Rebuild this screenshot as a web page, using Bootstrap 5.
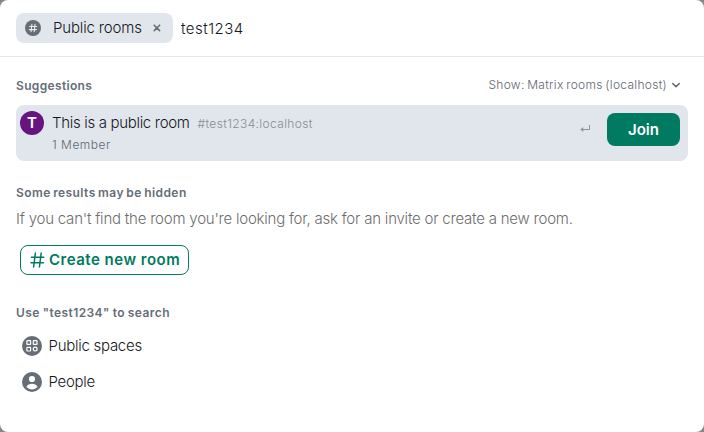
<!DOCTYPE html>
<html lang="en">
<head>
<meta charset="utf-8">
<meta name="viewport" content="width=device-width, initial-scale=1">
<title>Search</title>
<link href="https://cdn.jsdelivr.net/npm/bootstrap@5.3.0/dist/css/bootstrap.min.css" rel="stylesheet">
<style>
body{background:#868686;font-family:Inter,"Liberation Sans",sans-serif;font-size:15px;font-weight:350;line-height:24px;color:#15171c;height:432px;overflow:hidden}
.dialog{height:432px;border-radius:8px}
.searchbar{height:57px;border-bottom:1px solid #e3e8f0;padding:13px 16px 0}
.filter-chip{height:30px;width:157px;background:#e1e6ec;border-radius:8px;padding-left:9px}
.filter-chip .label{margin-left:12px;width:89px;white-space:nowrap;letter-spacing:-.16px}
.chip-x{margin-left:11px}
.query{margin-left:8px;padding-top:4px;letter-spacing:.48px}
.section{padding:0 16px}
.suggest-section{padding-top:21px}
.heading{font-size:12px;line-height:15px;font-weight:600;color:#656d77;letter-spacing:.42px;word-spacing:-1px}
.heading.use{letter-spacing:.42px;word-spacing:-.5px}
.heading.suggestions{letter-spacing:.34px}
.muted{color:#5f6772;font-size:12px;line-height:15px}
.scope{margin:-1px 7px 0 0;letter-spacing:.29px;word-spacing:-1px}
.chev{margin-left:4px}
.result{margin-top:12px;height:56px;background:#e1e6ec;border-radius:8px;padding:6px 8px 0 4px}
.avatar{width:24px;height:24px;background:#671481;color:#fff;font-size:15px;font-weight:600;line-height:24px}
.names{margin-left:8px}
.rname{letter-spacing:-.32px}
.alias{font-size:12px;color:#858c96;margin-left:8px;letter-spacing:.37px}
.members{margin-top:1px;letter-spacing:.5px}
.btn-join{margin-top:2px;width:73px;height:33px;background:#007a61;border-radius:8px;color:#fff;font-size:15px;font-weight:600;line-height:32px}
.enter{margin:13px 17px 0 0}
.hint{color:#6d6d6d;margin-top:7px;letter-spacing:-.218px;white-space:nowrap}
.btn-create{margin:14px 0 0 4px;width:169px;height:30px;border:1px solid #007a61;border-radius:8px;color:#007a61;font-size:15px;font-weight:600;line-height:28px;padding-left:9px}
.create-label{margin-left:4px;letter-spacing:.5px;white-space:nowrap}
.search-section{padding-top:30px}
.option{height:36px;padding-left:6px}
.option span{margin-left:6.5px;letter-spacing:-.27px}
</style>
<script src="https://cdn.jsdelivr.net/npm/bootstrap@5.3.0/dist/js/bootstrap.bundle.min.js"></script>
</head>
<body>
<main class="dialog bg-white overflow-hidden">
  <header class="searchbar d-flex align-items-start">
    <div class="filter-chip d-flex align-items-center">
      <svg width="16" height="16" viewBox="0 0 16 16"><circle cx="8" cy="8" r="8" fill="#656d77"/><path d="M6.900 4.200 6.100 11.800M10 4.200l-.8 7.600M4.500 6.500h7.200M4.200 9.600h7.200" stroke="#e8ecf1" stroke-width="1.100" stroke-linecap="round" fill="none"/></svg>
      <span class="label">Public rooms</span>
      <svg class="chip-x" width="8" height="8" viewBox="0 0 8 8"><path d="M1.200 1.200l5.400 5.400M6.600 1.200 1.200 6.600" stroke="#656d77" stroke-width="1.600" stroke-linecap="round"/></svg>
    </div>
    <div class="query">test1234</div>
  </header>
  <section class="section suggest-section">
    <div class="d-flex justify-content-between">
      <h2 class="heading mb-0 suggestions">Suggestions</h2>
      <div class="muted d-flex scope">Show: Matrix rooms (localhost)<svg class="chev" width="10" height="15" viewBox="0 0 10 15"><path d="M1.800 6.600 5 9.600l3.200-3" stroke="#656d77" stroke-width="1.500" fill="none" stroke-linecap="round" stroke-linejoin="round"/></svg></div>
    </div>
    <div class="result d-flex align-items-start">
      <div class="avatar rounded-circle text-center">T</div>
      <div class="names flex-grow-1">
        <div><span class="rname">This is a public room</span><span class="alias">#test1234:localhost</span></div>
        <div class="muted members">1 Member</div>
      </div>
      <svg class="enter" width="10" height="10" viewBox="0 0 10 10"><path d="M9.500 1v4.500H1" stroke="#8d939c" fill="none"/><path d="M3.200 3 .3 5.500 3.200 8z" fill="#8d939c"/></svg>
      <button class="btn btn-join p-0 border-0">Join</button>
    </div>
  </section>
  <section class="section pt-4">
    <h2 class="heading mb-0">Some results may be hidden</h2>
    <div class="hint">If you can't find the room you're looking for, ask for an invite or create a new room.</div>
    <button class="btn btn-create d-flex align-items-center py-0 pe-0"><svg width="15" height="16" viewBox="0 0 15 16"><path d="M5.400 1 3.600 15M11.200 1 9.400 15M1.400 5.200h12.400M1 10.800h12.400" stroke="#007a61" stroke-width="1.500" stroke-linecap="round"/></svg><span class="create-label">Create new room</span></button>
  </section>
  <section class="section search-section">
    <h2 class="heading use">Use "test1234" to search</h2>
    <div class="option d-flex align-items-center">
      <svg width="20" height="20" viewBox="0 0 20 20"><circle cx="10" cy="10" r="10" fill="#656d77"/><g fill="none" stroke="#fff" stroke-width="1.200"><rect x="4.900" y="4.700" width="3.700" height="3.700" rx=".5"/><rect x="11.300" y="4.700" width="3.700" height="3.700" rx=".5"/><rect x="4.900" y="11.300" width="3.700" height="3.700" rx=".5"/><circle cx="13.200" cy="13.100" r="1.900"/></g></svg>
      <span>Public spaces</span>
    </div>
    <div class="option d-flex align-items-center">
      <svg width="20" height="20" viewBox="0 0 20 20"><circle cx="10" cy="10" r="10" fill="#656d77"/><circle cx="10" cy="7" r="3.100" fill="#fff"/><path d="M4.400 15c1-2.200 3.200-3.200 5.600-3.200s4.600 1 5.600 3.200a7.600 7.600 0 0 1-11.200 0z" fill="#fff"/></svg>
      <span>People</span>
    </div>
  </section>
</main>
</body>
</html>
